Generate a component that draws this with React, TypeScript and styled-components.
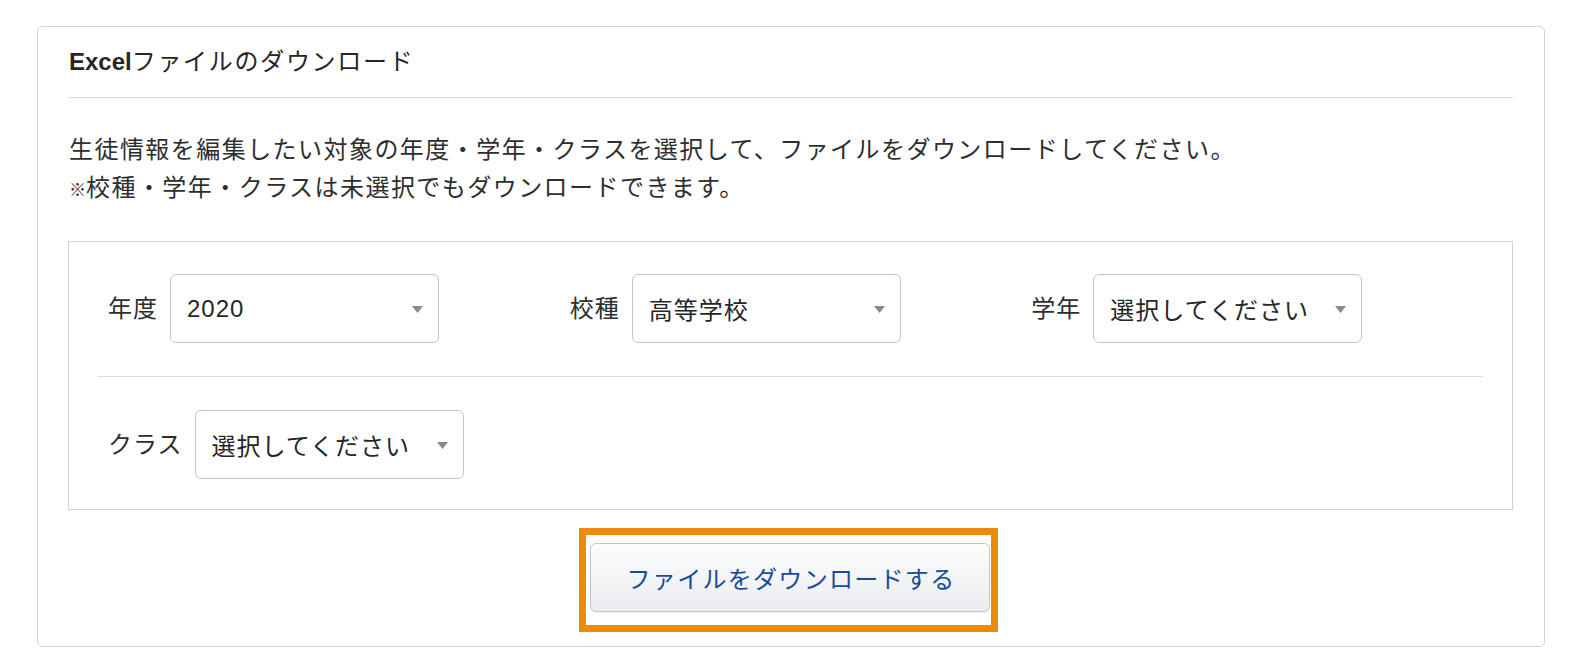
import React from "react";
import styled, { createGlobalStyle } from "styled-components";

const GlobalStyle = createGlobalStyle`
  html, body {
    margin: 0;
    padding: 0;
    background: #ffffff;
  }
  body {
    font-family: "Liberation Sans", "Noto Sans CJK JP", sans-serif;
    color: #333333;
    -webkit-font-smoothing: antialiased;
  }
  * { box-sizing: border-box; }
`;

const Page = styled.div`
  padding: 26px 41px 0 37px;
`;

const Card = styled.section`
  border: 1px solid #d4d4d4;
  border-radius: 5px;
  background: #ffffff;
  padding: 0 31px 0 30px;
  display: flex;
  flex-direction: column;
`;

const CardHeader = styled.h2`
  margin: 0;
  padding: 18px 0 18px 1px;
  font-size: 24px;
  line-height: 34px;
  font-weight: 400;
  letter-spacing: 1.7px;
  color: #262626;
  border-bottom: 1px solid #d9d9d9;
`;

const Strong = styled.span`
  font-weight: 700;
  letter-spacing: 0;
`;

const Description = styled.p`
  margin: 33px 0 0 1px;
  font-size: 24px;
  line-height: 38px;
  letter-spacing: 1.45px;
  color: #2e2e2e;
`;

const Small = styled.span`
  font-size: 17px;
  letter-spacing: 0;
`;

const FilterBox = styled.div`
  margin-top: 31px;
  border: 1px solid #d3d3d3;
  padding: 32px 29px 30px;
  display: flex;
  flex-direction: column;
`;

const FieldRow = styled.div`
  display: grid;
  grid-template-columns: repeat(3, 1fr);
`;

const Divider = styled.hr`
  margin: 33px 0;
  border: none;
  border-top: 1px solid #dcdcdc;
  height: 0;
`;

const Field = styled.div`
  display: flex;
  align-items: center;
  gap: 12px;
  padding-left: 10px;
  height: 69px;
`;

const Label = styled.span`
  font-size: 24px;
  letter-spacing: 1px;
  line-height: 30px;
  color: #2e2e2e;
  white-space: nowrap;
`;

const SelectBox = styled.div`
  width: 269px;
  height: 69px;
  border: 1px solid #c6c6c6;
  border-radius: 6px;
  background: #ffffff;
  display: flex;
  align-items: center;
  justify-content: space-between;
  padding: 0 15px 0 16px;
  font-size: 24px;
  letter-spacing: 1px;
  color: #262626;
  white-space: nowrap;
`;

const Arrow = styled.svg`
  flex: none;
  width: 11px;
  height: 7px;
  margin-top: 2px;
`;

const ButtonArea = styled.div`
  margin: 18px 0 14px;
  display: flex;
  justify-content: center;
`;

const Highlight = styled.div`
  display: inline-flex;
  border: 7px solid #ec8a0a;
  padding: 8px 1px 13px 4px;
  margin-left: -4px;
`;

const DownloadButton = styled.button`
  height: 69px;
  padding: 0 34px 0 36px;
  border: 1px solid #c2c5c9;
  border-radius: 6px;
  background: linear-gradient(#fcfdfd, #eaecef);
  box-shadow: 0 1px 1px rgba(0, 0, 0, 0.06);
  font-family: "Liberation Sans", "Noto Sans CJK JP", sans-serif;
  font-size: 24px;
  font-weight: 400;
  letter-spacing: 1.3px;
  color: #1a4a9a;
  cursor: pointer;
  white-space: nowrap;
`;

const SelectArrow = () => (
  <Arrow viewBox="0 0 11 7">
    <path d="M0 0 H11 L5.5 7 Z" fill="#8a8a8a" />
  </Arrow>
);

const Select = ({ value }: { value: string }) => (
  <SelectBox>
    <span>{value}</span>
    <SelectArrow />
  </SelectBox>
);

const FilterField = ({ label, value }: { label: string; value: string }) => (
  <Field>
    <Label>{label}</Label>
    <Select value={value} />
  </Field>
);

export default function App() {
  return (
    <>
      <GlobalStyle />
      <Page>
        <Card>
          <CardHeader>
            <Strong>Excel</Strong>ファイルのダウンロード
          </CardHeader>
          <Description>
            生徒情報を編集したい対象の年度・学年・クラスを選択して、ファイルをダウンロードしてください。
            <br />
            <Small>※</Small>校種・学年・クラスは未選択でもダウンロードできます。
          </Description>
          <FilterBox>
            <FieldRow>
              <FilterField label="年度" value="2020" />
              <FilterField label="校種" value="高等学校" />
              <FilterField label="学年" value="選択してください" />
            </FieldRow>
            <Divider />
            <FieldRow>
              <FilterField label="クラス" value="選択してください" />
            </FieldRow>
          </FilterBox>
          <ButtonArea>
            <Highlight>
              <DownloadButton type="button">ファイルをダウンロードする</DownloadButton>
            </Highlight>
          </ButtonArea>
        </Card>
      </Page>
    </>
  );
}
